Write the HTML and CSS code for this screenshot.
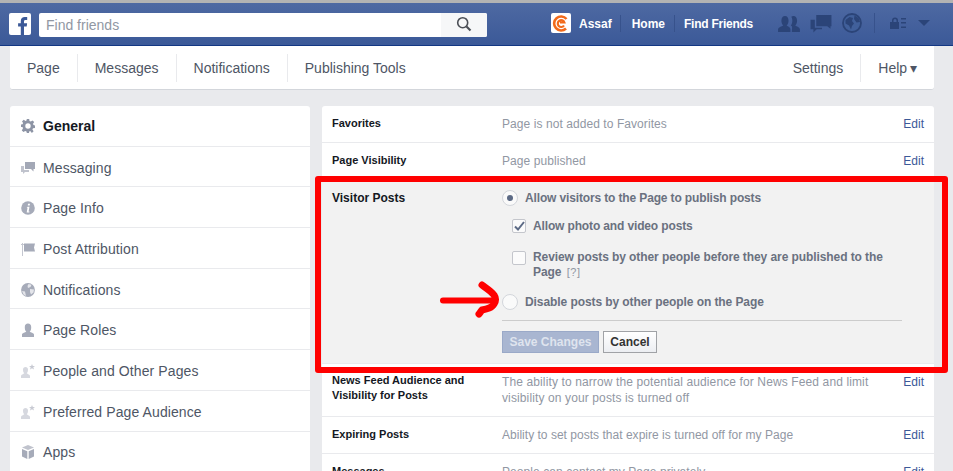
FILE: index.html
```html
<!DOCTYPE html>
<html lang="en">
<head>
  <meta charset="UTF-8" />
  <title>Page Settings</title>
  <link rel="stylesheet" href="styles.css">
</head>
<body>
  <!-- top blue bar -->
  <header class="topbar">
    <svg class="fb-logo" width="22" height="22" viewBox="0 0 22 22">
      <rect width="22" height="22" rx="2" fill="#fff"/>
      <path d="M15 22v-8.500h2.700l.4-3.200H15V8.400c0-.9.300-1.500 1.600-1.500h1.600V4c-.3 0-1.300-.1-2.400-.1-2.400 0-4 1.400-4 4.100v2.300H9.100v3.200h2.700V22z" fill="#3b5998"/>
    </svg>
    <div class="search">
      <span class="search-text">Find friends</span>
      <span class="search-btn">
        <svg width="16" height="16" viewBox="0 0 16 16" fill="none" stroke="#4b4f56">
          <circle cx="6.700" cy="6.700" r="5" stroke-width="1.600"/>
          <path d="M10.500 10.500l4 4" stroke-width="2.200"/>
        </svg>
      </span>
    </div>
    <nav class="topnav">
      <svg class="avatar" width="20" height="20" viewBox="0 0 20 20" fill="none" stroke="#f26a1b">
        <rect width="20" height="20" rx="2" fill="#fff" stroke="none"/>
        <path d="M15.500 6A7 7 0 1 0 15 15.500" stroke-width="2.600"/>
        <path d="M13 12.500A3.400 3.400 0 1 1 13.400 9.500H9" stroke-width="2.200"/>
      </svg>
      <a class="toplink name">Assaf</a>
      <a class="toplink sep">Home</a>
      <a class="toplink sep sep-last">Find Friends</a>
    </nav>
    <div class="jewels">
      <svg width="22" height="19" viewBox="0 0 23 20" fill="#2b4478">
        <path d="M0 19v-3c0-2 4-3 5.500-4-1.500-1.500-2-3-2-5 0-3 1.500-5 3.800-5s3.700 2 3.700 5c0 2-.5 3.500-2 5 1.500 1 4 2 4 4v3z"/>
        <path d="M14.500 19h8.500v-3c0-2-3.500-3-5-4 1.500-1.500 2-3 2-5 0-3-1.500-5-3.700-5-1 0-1.800.4-2.400 1 .7 1 1.100 2.500 1.100 4 0 2-.5 3.500-1.500 5 1 .7 1 1 1 1 .6 1 0 3 0 6z"/>
      </svg>
      <svg width="22" height="19" viewBox="0 0 22 20" fill="#2b4478">
        <path d="M6 1h16v12h-1v2.500L17.500 13H6z"/>
        <path d="M0 6h4.500v8.500H12V16H6.500L3 19.500V16H0z"/>
      </svg>
      <svg width="20" height="20" viewBox="0 0 20 20">
        <circle cx="10" cy="10" r="9" fill="#41609b" stroke="#2b4478" stroke-width="1.800"/>
        <path d="M3.500 7l4-3 3.500 1-1 3 2 2.500-2 2.500-1 3.500-2-4-3.500-2zM12.500 2.500l4 2.500 1.500 4-3.500 .5-2.500-3.500z" fill="#2b4478"/>
      </svg>
    </div>
    <div class="account">
      <svg width="16" height="12" viewBox="0 0 16 12" fill="#2b4478">
        <path d="M2 5V3.500a3 3 0 0 1 6 0V5h1v7H0V5zm1.500 0h3V3.500a1.500 1.500 0 0 0-3 0z"/>
        <path d="M11 1h5v1.500h-5zM11 5h5v1.500h-5zM11 9.500h5V11h-5z"/>
      </svg>
      <span class="caret"></span>
    </div>
  </header>

  <!-- page tabs -->
  <div class="tabs">
    <a class="tab">Page</a>
    <a class="tab">Messages</a>
    <a class="tab">Notifications</a>
    <a class="tab">Publishing Tools</a>
    <a class="tab tab-right">Settings</a>
    <a class="tab">Help <span class="help-caret">▾</span></a>
  </div>

  <div class="columns">
    <ul class="sidebar">
      <li class="side-row current">
        <svg class="side-icon" width="14" height="14" viewBox="0 0 14 14"><path fill="#8d94a5" fill-rule="evenodd" d="M5.800 0h2.400l.3 2 1.300.6L11.500 1.400l1.700 1.700L12 4.800l.5 1.300 1.500.4v2.400l-2 .3-.6 1.300 1.200 1.700-1.700 1.700L9.200 12l-1 .4L8 14H5.800l-.3-1.600-1.300-.5-1.700 1.200-1.700-1.700L2 9.200l-.5-1.100L0 8V5.600l1.600-.3.5-1.200L1 2.400l1.700-1.700 1.800 1.200 1-.4zM7 4.300a2.700 2.700 0 1 0 0 5.400 2.700 2.700 0 0 0 0-5.400z"/></svg>
        General
      </li>
      <li class="side-row">
        <svg class="side-icon" width="14" height="14" viewBox="0 0 14 14"><path fill="#a3a8b6" d="M4 1h10v7h-1.500v2.500L10 8H4z"/><path fill="#c0c3cd" d="M0 5h3v4h5v2H4l-2 2v-2H0z"/></svg>
        Messaging
      </li>
      <li class="side-row">
        <svg class="side-icon" width="14" height="14" viewBox="0 0 14 14"><circle cx="7" cy="7" r="6.800" fill="#a6abb9"/><path fill="#fff" d="M7 2.700h2L8.700 4.500H6.800zM6.500 5.800h2L7.600 10.500h.9l-.2.900H5.700l.8-4.700h-.8z"/></svg>
        Page Info
      </li>
      <li class="side-row">
        <svg class="side-icon" width="14" height="14" viewBox="0 0 14 14"><path fill="#c4c7d0" d="M1 1h1v13H1zM0 2h3v1H0z"/><path fill="#a6abb9" d="M3 1.500h11l-1 4 1 4H3z"/></svg>
        Post Attribution
      </li>
      <li class="side-row">
        <svg class="side-icon" width="14" height="14" viewBox="0 0 14 14"><circle cx="7" cy="7" r="6.900" fill="#a6abb9"/><path fill="#e4e5ea" d="M7.500 1l3 .8-1 2.200-2.500 1-.5-2zM9 6l4 .5-.5 3-2.500 2-1-2.500zM1 8l3 .5 1 4.500-2.500-1.500z"/></svg>
        Notifications
      </li>
      <li class="side-row">
        <svg class="side-icon" width="14" height="14" viewBox="0 0 14 14"><path fill="#a6abb9" d="M1 14v-2.500c0-1.500 3.500-2 4.300-3C4 7.500 3.800 6 3.800 4 3.800 2 5 .5 7 .5S10.200 2 10.200 4c0 2-.2 3.500-1.500 4.500.8 1 4.300 1.500 4.300 3V14z"/></svg>
        Page Roles
      </li>
      <li class="side-row">
        <svg class="side-icon" width="14" height="14" viewBox="0 0 14 14"><path fill="#d6d8df" d="M0 14v-2c0-1.500 2.500-1.800 3.300-2.700C2.300 8.500 2 7 2 5.500 2 4 3 3 4.500 3S7 4 7 5.500c0 1.500-.3 3-1.300 3.800.8.900 3.300 1.200 3.300 2.700v2z"/><path fill="#c8cad3" d="M11 0l.8 2H14l-1.700 1.300.7 2.200L11 4.200 9 5.500l.7-2.200L8 2h2.200z"/></svg>
        People and Other Pages
      </li>
      <li class="side-row">
        <svg class="side-icon" width="14" height="14" viewBox="0 0 14 14"><path fill="#d6d8df" d="M0 14v-2c0-1.500 2.500-1.800 3.300-2.700C2.300 8.500 2 7 2 5.500 2 4 3 3 4.500 3S7 4 7 5.500c0 1.500-.3 3-1.300 3.800.8.900 3.300 1.200 3.300 2.700v2z"/><path fill="#c8cad3" d="M11 0l.8 2H14l-1.700 1.300.7 2.200L11 4.200 9 5.500l.7-2.200L8 2h2.200z"/></svg>
        Preferred Page Audience
      </li>
      <li class="side-row">
        <svg class="side-icon" width="14" height="14" viewBox="0 0 14 14"><path fill="#c0c3cd" d="M7 0l6 2.500L7 5 1 2.500z"/><path fill="#a6abb9" d="M1 4l5.300 2.200V14L1 11.500zM13 4v7.500L7.700 14V6.200z"/></svg>
        Apps
      </li>
    </ul>

    <main class="settings">
      <section class="set-row">
        <div class="set-label">Favorites</div>
        <div class="set-value">Page is not added to Favorites</div>
        <a class="set-edit">Edit</a>
      </section>
      <section class="set-row">
        <div class="set-label">Page Visibility</div>
        <div class="set-value">Page published</div>
        <a class="set-edit">Edit</a>
      </section>

      <section class="set-row open">
        <div class="set-label">Visitor Posts</div>
        <form class="set-form">
          <div class="opt radio-line">
            <span class="radio on"></span>
            <span>Allow visitors to the Page to publish posts</span>
          </div>
          <div class="opt check-line first-check">
            <span class="check">
              <svg width="11" height="10" viewBox="0 0 11 10"><path d="M1 5.500l3 3 6-7.500" fill="none" stroke="#5c6a85" stroke-width="2"/></svg>
            </span>
            <span>Allow photo and video posts</span>
          </div>
          <div class="opt check-line second-check">
            <span class="check"></span>
            <span>Review posts by other people before they are published to the Page <a class="hint">[?]</a></span>
          </div>
          <div class="opt radio-line last-radio">
            <span class="radio"></span>
            <span>Disable posts by other people on the Page</span>
          </div>
          <div class="form-btns">
            <button type="button" class="btn btn-save">Save Changes</button>
            <button type="button" class="btn btn-cancel">Cancel</button>
          </div>
        </form>
      </section>

      <section class="set-row tall">
        <div class="set-label">News Feed Audience and Visibility for Posts</div>
        <div class="set-value">The ability to narrow the potential audience for News Feed and limit visibility on your posts is turned off</div>
        <a class="set-edit">Edit</a>
      </section>
      <section class="set-row">
        <div class="set-label">Expiring Posts</div>
        <div class="set-value snug">Ability to set posts that expire is turned off for my Page</div>
        <a class="set-edit">Edit</a>
      </section>
      <section class="set-row">
        <div class="set-label">Messages</div>
        <div class="set-value">People can contact my Page privately.</div>
        <a class="set-edit">Edit</a>
      </section>
    </main>
  </div>

  <!-- red annotation drawn over the screenshot -->
  <div class="red-box"></div>
  <svg class="red-arrow" width="66" height="40" viewBox="0 0 66 40" fill="none" stroke="#f00" stroke-linecap="round" stroke-linejoin="round">
    <path d="M4 19.500h52" stroke-width="6"/>
    <path d="M43 4c4 3 9 6 12 10 2 3 2 6 0 9-2 4-7 5-12 6-1 1-2 3-3 4" stroke-width="7"/>
  </svg>
</body>
</html>
```

FILE: styles.css
```css
html, body {
  margin: 0;
  padding: 0;
  height: 471px;
  overflow: hidden;
}

body {
  position: relative;
  background-color: #e9eaed;
  font-family: "Liberation Sans", Arial, sans-serif;
  font-size: 12px;
  color: #4e5665;
}

/* top bar */
.topbar {
  box-sizing: border-box;
  height: 46px;
  display: flex;
  align-items: flex-start;
  padding-top: 10px;
  padding-left: 9px;
  border-top: 3px solid #b3b3b3;
  border-bottom: 1px solid #133783;
  background: linear-gradient(#4e69a2, #3b5998);
}

.fb-logo {
  flex: none;
}

.search {
  box-sizing: border-box;
  width: 448px;
  height: 24px;
  margin-left: 8px;
  display: flex;
  background: #fff;
  border-radius: 2px;
}

.search-text {
  flex: 1;
  padding-left: 7px;
  font-size: 14px;
  line-height: 25px;
  color: #9197a3;
}

.search-btn {
  width: 46px;
  background: #f6f7f8;
  border-radius: 0 2px 2px 0;
  display: flex;
  justify-content: center;
  padding-top: 3px;
  box-sizing: border-box;
}

.topnav {
  display: flex;
  align-items: center;
  height: 20px;
  margin-left: 64px;
}

.avatar {
  flex: none;
}

.toplink {
  font-weight: bold;
  font-size: 12px;
  line-height: 16px;
  padding-top: 1px;
  color: #fff;
}

.name {
  margin-left: 8px;
  padding-right: 8px;
}

.sep {
  padding-left: 11px;
  padding-right: 9px;
  border-left: 1px solid #37528c;
}

.sep-last {
  padding-left: 9px;
  letter-spacing: -0.25px;
}

.jewels {
  display: flex;
  align-items: center;
  gap: 10px;
  height: 20px;
  margin-left: 16px;
  padding-right: 12px;
  border-right: 1px solid #37528c;
}

.account {
  display: flex;
  align-items: center;
  height: 20px;
  margin-left: 15px;
  gap: 12px;
}

.caret {
  width: 0;
  height: 0;
  border-left: 6px solid transparent;
  border-right: 6px solid transparent;
  border-top: 6px solid #2b4478;
}

/* tabs */
.tabs {
  box-sizing: border-box;
  height: 44px;
  margin: 0 19px 0 10px;
  display: flex;
  align-items: center;
  background: #fff;
  border-bottom: 1px solid #d3d6db;
  border-radius: 0 0 3px 3px;
}

.tab {
  font-size: 14px;
  line-height: 28px;
  padding: 0 17px;
  border-left: 1px solid #e9eaed;
}

.tab:first-child {
  border-left: 0;
}

.tab-right {
  margin-left: auto;
  border-left: 0;
}

.help-caret {
  font-size: 14px;
  margin-left: -1px;
}

/* two columns */
.columns {
  display: flex;
  gap: 12px;
  margin: 16px 19px 0 10px;
}

.sidebar {
  width: 300px;
  margin: 0;
  padding: 0;
  list-style: none;
  background: #fff;
  border-radius: 3px 3px 0 0;
  flex: none;
}

.side-row {
  box-sizing: border-box;
  height: 40.700px;
  display: flex;
  align-items: center;
  padding-left: 11px;
  padding-top: 2px;
  font-size: 14px;
  letter-spacing: 0.1px;
  border-bottom: 1px solid #e9eaed;
}

.side-icon {
  margin-right: 8px;
  flex: none;
}

.current {
  padding-top: 0;
  letter-spacing: 0;
  font-weight: bold;
  color: #141823;
}

/* settings list */
.settings {
  flex: 1;
  background: #fff;
  border-radius: 3px 3px 0 0;
}

.set-row {
  box-sizing: border-box;
  display: flex;
  align-items: flex-start;
  padding: 10px 10px 0;
  height: 37px;
  border-bottom: 1px solid #e9eaed;
}

.set-label {
  width: 170px;
  flex: none;
  font-size: 11px;
  font-weight: bold;
  line-height: 15px;
  color: #141823;
}

.set-value {
  flex: 1;
  padding-right: 20px;
  line-height: 16px;
  letter-spacing: 0.07px;
  color: #9197a3;
}

.set-value.snug {
  letter-spacing: 0.02px;
}

.set-edit {
  line-height: 16px;
  color: #3b5998;
}

.tall {
  height: 53px;
  padding-top: 9px;
}

.tall .set-value {
  padding-top: 1px;
  letter-spacing: 0.12px;
}

.tall .set-edit {
  padding-top: 1px;
}

/* expanded row */
.open {
  height: 184px;
  background: #f2f2f2;
}

.open .set-label {
  margin-top: 1px;
  font-size: 12px;
}

.set-form {
  flex: 1;
  margin-right: 22px;
  font-weight: bold;
  line-height: 16px;
  letter-spacing: -0.14px;
  color: #6a7180;
}

.opt {
  display: flex;
  align-items: flex-start;
}

.radio-line {
  gap: 7px;
}

.check-line {
  gap: 7px;
  padding-left: 10px;
}

.first-check {
  margin-top: 12px;
}

.second-check {
  margin-top: 16px;
  line-height: 15px;
  letter-spacing: -0.08px;
}

.last-radio {
  margin-top: 14px;
  letter-spacing: -0.08px;
}

.radio {
  box-sizing: border-box;
  flex: none;
  width: 16px;
  height: 16px;
  border: 1px solid #d3d6db;
  border-radius: 50%;
  background: #fafafa;
  position: relative;
}

.radio.on::after {
  content: "";
  position: absolute;
  left: 4px;
  top: 4px;
  width: 6px;
  height: 6px;
  border-radius: 50%;
  background: #5c6a85;
}

.check {
  box-sizing: border-box;
  flex: none;
  width: 14px;
  height: 14px;
  margin-top: 1px;
  border: 1px solid #c4c6cc;
  border-radius: 2px;
  background: #fbfbfb;
  display: flex;
  align-items: center;
  justify-content: center;
}

.hint {
  font-weight: normal;
  font-size: 11px;
  letter-spacing: 0.6px;
  color: #9197a3;
  margin-left: 2px;
}

.form-btns {
  display: flex;
  gap: 4px;
  margin-top: 10px;
  padding-top: 10px;
  border-top: 1px solid #ccc;
  letter-spacing: 0;
}

.btn {
  box-sizing: border-box;
  height: 22px;
  padding: 0 6px;
  font-family: inherit;
  font-size: 12px;
  font-weight: bold;
  border: 1px solid;
}

.btn-save {
  width: 97px;
  background: #a9b6d1;
  border-color: #9aa9c8;
  color: #dfe4ee;
}

.btn-cancel {
  width: 54px;
  background: linear-gradient(#fff, #eceef2);
  border-color: #a0a2a6;
  color: #333;
}

/* annotation */
.red-box {
  position: absolute;
  left: 315px;
  top: 176px;
  width: 633px;
  height: 197px;
  box-sizing: border-box;
  border: 6px solid #f00;
  border-radius: 3px;
}

.red-arrow {
  position: absolute;
  left: 439px;
  top: 281px;
}
```
